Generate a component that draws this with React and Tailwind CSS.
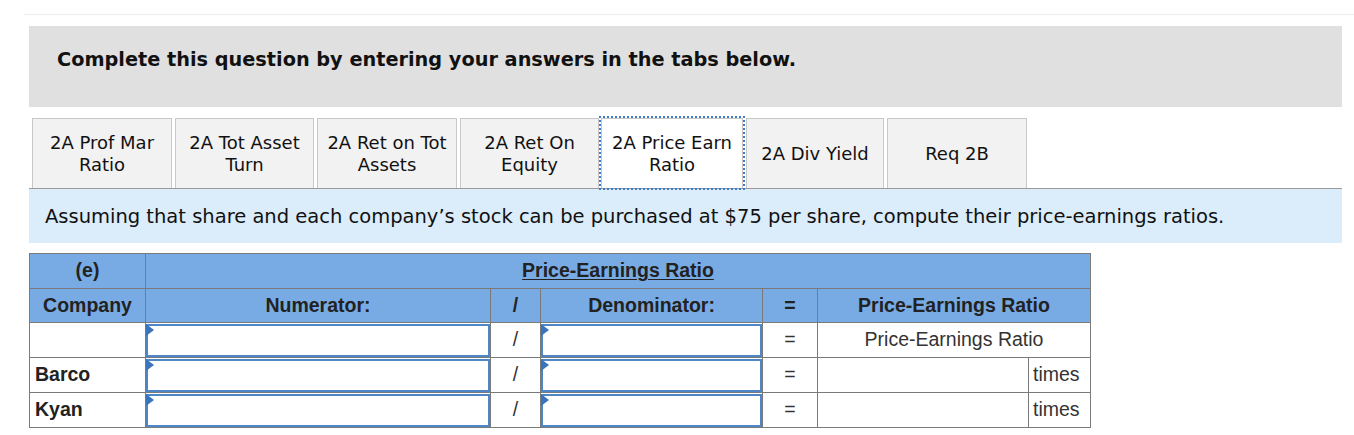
import React from 'react';

const tabs = [
    { label: ['2A Prof Mar', 'Ratio'], w: 'w-[140px]' },
    { label: ['2A Tot Asset', 'Turn'], w: 'w-[139px]' },
    { label: ['2A Ret on Tot', 'Assets'], w: 'w-[140px]' },
    { label: ['2A Ret On', 'Equity'], w: 'w-[139px]' },
    { label: ['2A Price Earn', 'Ratio'], w: 'w-[142px]', active: true },
    { label: ['2A Div Yield'], w: 'w-[138px]' },
    { label: ['Req 2B'], w: 'w-[140px]' },
];

const rows = [
    { company: '', result: 'label' },
    { company: 'Barco', result: 'times' },
    { company: 'Kyan', result: 'times' },
];

const AnswerBox = () => (
    <div className="relative h-[33px] border-2 border-[#4f86c6] bg-white">
        {/* little corner marker on every input */}
        <svg className="absolute -left-[2px] -top-[2px]" width="8" height="12" viewBox="0 0 8 12">
            <path d="M0 0 L8 6 L0 12 Z" fill="#3a74bd" />
        </svg>
    </div>
);

const App = () => {
    return (
        <div className="w-[1354px] h-[435px] bg-white text-black overflow-hidden">
            <div className="pt-[14px] pl-[24px]">
                <div className="h-px bg-[#ececec]"></div>
            </div>

            <div className="ml-[29px] w-[1313px] pt-[11px]">
                {/* question banner */}
                <div className="h-[81px] bg-[#e0e0e0] flex items-center pl-[28px] pb-[12px] font-['DejaVu_Sans',sans-serif] font-bold text-[19.3px] text-[#111]">
                    Complete this question by entering your answers in the tabs below.
                </div>

                {/* tabs */}
                <div className="mt-[11px] flex items-end gap-[3px] pl-[3px] border-b border-[#9a9a9a] h-[71px] font-['DejaVu_Sans',sans-serif] text-[18px] leading-[22px] text-[#111]">
                    {tabs.map((t, i) => (
                        <div
                            key={i}
                            className={`${t.w} h-[70px] flex flex-col items-center justify-center text-center border border-b-0 border-[#c8c8c8] whitespace-nowrap ${
                                t.active
                                    ? 'bg-white outline-2 outline-dotted outline-[#3b7bc9] -ml-[1px]'
                                    : 'bg-[#f2f2f2]'
                            }`}
                        >
                            {t.label.map((l) => (
                                <span key={l}>{l}</span>
                            ))}
                        </div>
                    ))}
                </div>

                {/* instructions */}
                <div className="h-[54px] bg-[#dbecfa] flex items-center pl-[16px] pt-[2px] font-['DejaVu_Sans',sans-serif] text-[19.5px] text-[#111] whitespace-nowrap">
                    Assuming that share and each company’s stock can be purchased at $75 per share, compute their price-earnings ratios.
                </div>

                {/* answer table */}
                <table className="mt-[10px] border-collapse font-['Liberation_Sans',Arial,sans-serif] text-[19.5px] text-[#222]">
                    <colgroup>
                        <col className="w-[116px]" />
                        <col className="w-[345px]" />
                        <col className="w-[50px]" />
                        <col className="w-[222px]" />
                        <col className="w-[55px]" />
                        <col className="w-[211px]" />
                        <col className="w-[62px]" />
                    </colgroup>
                    <thead>
                        <tr className="h-[35px] bg-[#78abe4] font-bold">
                            <th className="border border-[#7a7a7a] text-center">(e)</th>
                            <th colSpan={6} className="border border-[#7a7a7a] text-center">
                                <span className="underline underline-offset-2">Price-Earnings Ratio</span>
                            </th>
                        </tr>
                        <tr className="h-[34px] bg-[#78abe4] font-bold">
                            <th className="border border-[#7a7a7a] text-center">Company</th>
                            <th className="border border-[#7a7a7a] text-center">Numerator:</th>
                            <th className="border border-[#7a7a7a] text-center">/</th>
                            <th className="border border-[#7a7a7a] text-center">Denominator:</th>
                            <th className="border border-[#7a7a7a] text-center">=</th>
                            <th colSpan={2} className="border border-[#7a7a7a] text-center">Price-Earnings Ratio</th>
                        </tr>
                    </thead>
                    <tbody>
                        {rows.map((r, i) => (
                            <tr key={i} className="h-[35px]">
                                <td className="border border-[#7a7a7a] px-[5px] font-bold">{r.company}</td>
                                <td className="border border-[#7a7a7a] p-0">
                                    <AnswerBox />
                                </td>
                                <td className="border border-[#7a7a7a] text-center text-[#333]">/</td>
                                <td className="border border-[#7a7a7a] p-0">
                                    <AnswerBox />
                                </td>
                                <td className="border border-[#7a7a7a] text-center text-[#333]">=</td>
                                {r.result === 'label' ? (
                                    <td colSpan={2} className="border border-[#7a7a7a] text-center text-[#333]">
                                        Price-Earnings Ratio
                                    </td>
                                ) : (
                                    <>
                                        <td className="border border-[#7a7a7a]"></td>
                                        <td className="border border-[#7a7a7a] px-[4px] text-[#333]">times</td>
                                    </>
                                )}
                            </tr>
                        ))}
                    </tbody>
                </table>
            </div>
        </div>
    );
};

export default App;
